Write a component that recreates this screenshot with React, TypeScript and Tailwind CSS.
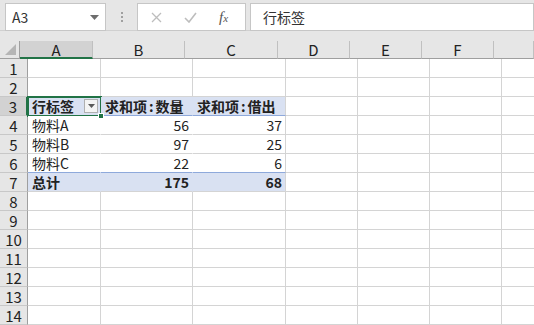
import React from "react";

const FONT = { fontFamily: '"Noto Sans CJK SC", "Liberation Sans", sans-serif' };
const cols = ["A", "B", "C", "D", "E", "F", ""];
const colW = [73, 92, 93, 72, 72, 72, 40];

type Cell = { text?: React.ReactNode; align?: "l" | "r"; bold?: boolean; bg?: boolean };

const colon = <span className="mx-[2px]">:</span>;

const data: Record<number, Cell[]> = {
  3: [
    { text: "行标签", bold: true, bg: true },
    { text: <>求和项{colon}数量</>, bold: true, bg: true },
    { text: <>求和项{colon}借出</>, bold: true, bg: true },
  ],
  4: [{ text: "物料A" }, { text: "56", align: "r" }, { text: "37", align: "r" }],
  5: [{ text: "物料B" }, { text: "97", align: "r" }, { text: "25", align: "r" }],
  6: [{ text: "物料C" }, { text: "22", align: "r" }, { text: "6", align: "r" }],
  7: [
    { text: "总计", bold: true, bg: true },
    { text: "175", align: "r", bold: true, bg: true },
    { text: "68", align: "r", bold: true, bg: true },
  ],
};

export default function App() {
  const rows = Array.from({ length: 14 }, (_, i) => i + 1);
  return (
    <div className="w-[534px] h-[325px] overflow-hidden bg-[#e6e6e6] text-[#222]" style={FONT}>
      {/* Top bar */}
      <div className="h-[31px] flex items-start pt-[3px] border-b border-[#d0d0d0]">
        <div className="ml-[5px] w-[101px] h-[28px] bg-white border border-[#c6c6c6] flex items-center justify-between pl-[6px] pr-[6px]">
          <span className="text-[14px] text-[#333] leading-none">A3</span>
          <svg width="9" height="5" viewBox="0 0 9 5"><path d="M0 0h9L4.5 5z" fill="#6d6d6d" /></svg>
        </div>
        <div className="w-[31px] h-[28px] flex flex-col items-center justify-center gap-[2px]">
          <span className="w-[2px] h-[2px] bg-[#a0a0a0]" />
          <span className="w-[2px] h-[2px] bg-[#a0a0a0]" />
          <span className="w-[2px] h-[2px] bg-[#a0a0a0]" />
        </div>
        <div className="w-[109px] h-[28px] bg-white border border-[#c6c6c6] flex items-center">
          <svg className="ml-[13px]" width="11" height="11" viewBox="0 0 11 11"><path d="M1 1l9 9M10 1l-9 9" stroke="#bdbdbd" strokeWidth="1.3" /></svg>
          <svg className="ml-[22px]" width="13" height="11" viewBox="0 0 13 11"><path d="M1 6l4 4 7-9" stroke="#bdbdbd" strokeWidth="1.6" fill="none" /></svg>
          <span className="ml-[22px] text-[15px] italic text-[#555] leading-none" style={{ fontFamily: '"Liberation Serif", serif' }}>
            f<span className="text-[11px]">x</span>
          </span>
        </div>
        <div className="ml-[4px] flex-1 h-[28px] bg-white border border-[#c6c6c6] flex items-center pl-[12px]">
          <span className="text-[14px] text-[#333] leading-none">行标签</span>
        </div>
      </div>
      <div className="h-[10px]" />
      {/* Column header */}
      <div className="flex h-[18px]">
        <div className="w-[28px] h-full relative border-r border-b border-[#9f9f9f]">
          <svg className="absolute right-[3px] bottom-[3px]" width="11" height="11" viewBox="0 0 11 11"><path d="M11 0v11H0z" fill="#b5b5b5" /></svg>
        </div>
        {cols.map((c, i) => (
          <div
            key={i}
            style={{ width: colW[i] }}
            className={
              "h-full shrink-0 flex items-center justify-center text-[15px] leading-none border-r border-[#c0c0c0] text-[#222] " +
              (i === 0 ? "bg-[#d2d2d2] border-b-2 border-b-[#217346]" : "border-b border-b-[#9f9f9f]")
            }
          >
            {c}
          </div>
        ))}
      </div>
      {/* Rows */}
      {rows.map((r) => (
        <div key={r} className="flex h-[19px]">
          <div
            className={
              "w-[28px] shrink-0 h-full flex items-center justify-center text-[15px] leading-none border-b border-[#c8c8c8] text-[#222] " +
              (r === 3 ? "bg-[#d2d2d2] border-r-2 border-r-[#217346]" : "border-r border-r-[#9f9f9f]")
            }
          >
            {r}
          </div>
          {cols.map((c, i) => {
            const cell = data[r]?.[i];
            const pivot = !!data[r] && i < 3;
            return (
              <div
                key={i}
                style={{ width: colW[i] }}
                className={
                  "shrink-0 h-full relative flex items-center pl-[4px] pr-[3px] text-[14px] leading-none bg-white whitespace-nowrap " +
                  (pivot && i < 2 ? "border-r border-r-transparent " : "border-r border-r-[#d4d4d4] ") +
                  (r === 3 && i < 3
                    ? "border-b border-b-[#8ea9db] "
                    : r === 6 && i < 3
                    ? "border-b border-b-[#8ea9db] "
                    : "border-b border-b-[#d4d4d4] ") +
                  (cell?.bg ? "!bg-[#d9e1f2] " : "") +
                  (cell?.bold ? "font-bold " : "") +
                  (cell?.align === "r" ? "justify-end" : "justify-start")
                }
              >
                {cell?.text}
                {r === 3 && i === 0 && (
                  <>
                    <div className="absolute right-[2px] top-[2px] w-[14px] h-[14px] bg-[#f4f4f4] border border-[#b0b0b0] flex items-center justify-center">
                      <svg width="7" height="4" viewBox="0 0 7 4"><path d="M0 0h7L3.5 4z" fill="#5a5a5a" /></svg>
                    </div>
                    <div className="absolute -left-[1px] -top-[1px] w-[75px] h-[21px] border-2 border-[#217346] pointer-events-none" />
                    <div className="absolute -right-[4px] -bottom-[4px] w-[6px] h-[6px] bg-[#217346] border border-white z-10" />
                  </>
                )}
              </div>
            );
          })}
        </div>
      ))}
    </div>
  );
}
